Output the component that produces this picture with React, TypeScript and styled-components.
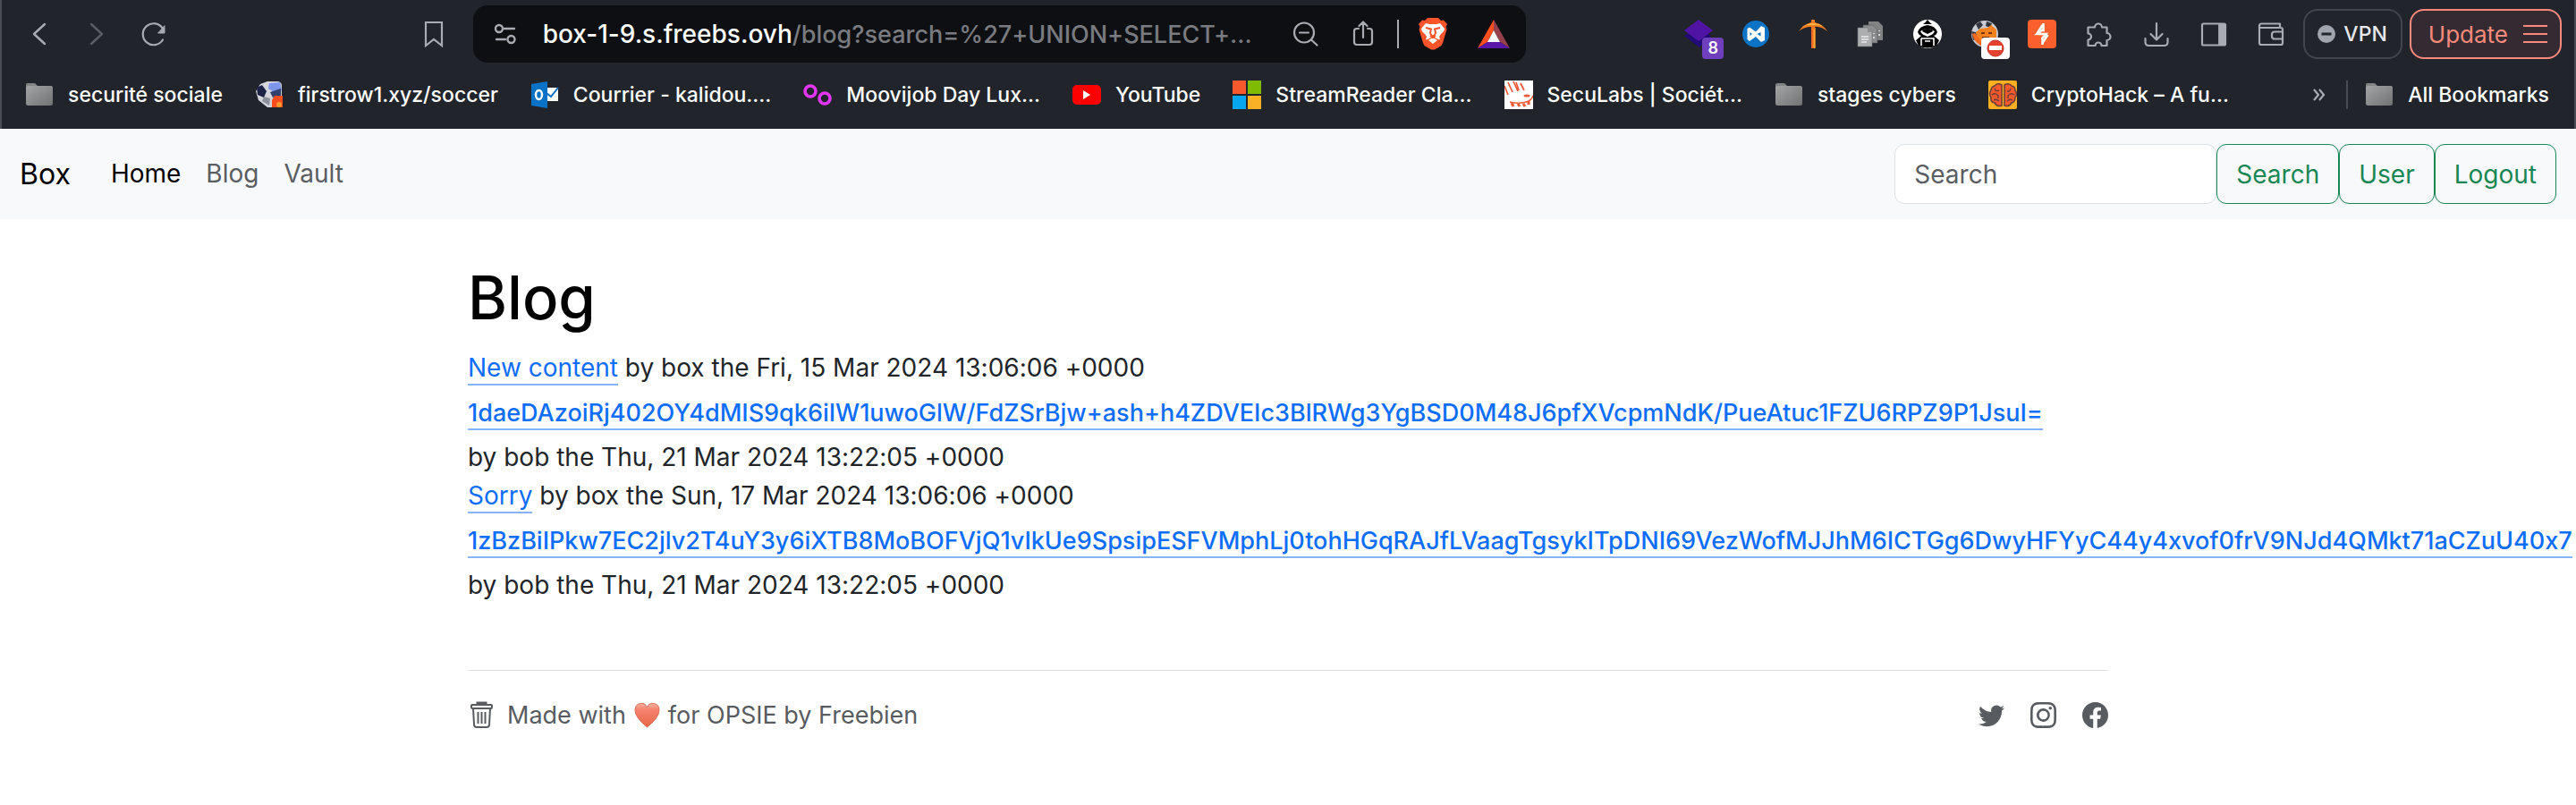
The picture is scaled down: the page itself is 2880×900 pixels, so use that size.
import React from 'react';
import styled, { createGlobalStyle } from 'styled-components';
import { BsFacebook, BsInstagram, BsTwitter } from 'react-icons/bs';

const GlobalStyle = createGlobalStyle`
  *, *::before, *::after { box-sizing: border-box; }
  body {
    margin: 0;
    background: #fff;
    color: #212529;
    font-family: Inter, "Liberation Sans", sans-serif;
    font-feature-settings: "calt" 0;
    overflow-x: hidden;
  }
  button, input { font: inherit; }
  svg { display: block; flex: none; }
`;

/* ---------- Browser chrome ---------- */

const Chrome = styled.header`
  background: #21242b;
  border: 2px solid #4a4c52;
  border-width: 0 2px;
  padding-bottom: 8px;
`;

const Toolbar = styled.div`
  display: flex;
  align-items: center;
  height: 76px;
  padding: 0 14px 0 10px;
`;

const Slot = styled.button`
  position: relative;
  display: flex;
  flex: none;
  align-items: center;
  justify-content: center;
  width: 64px;
  height: 64px;
  padding: 0;
  border: 0;
  background: none;
  color: #a8abb1;
`;

const History = styled.nav`
  display: flex;
`;

const SaveArea = styled.div`
  display: flex;
  flex: 250 0 64px;
  justify-content: flex-end;
  margin-right: 12px;
`;

const AddressBar = styled.div`
  display: flex;
  flex: 1176 1 0;
  align-items: center;
  height: 64px;
  min-width: 0;
  padding: 0 4px;
  border-radius: 16px;
  background: #0d0f13;
  & > :last-child { margin-left: 4px; }
`;

const Address = styled.span`
  flex: 1;
  min-width: 0;
  margin-left: 10px;
  overflow: hidden;
  color: #797b80;
  font-size: 27px;
  font-weight: 500;
  line-height: 36px;
  white-space: nowrap;
`;

const Host = styled.span`
  color: #fff;
  font-size: 28px;
`;

const Rule = styled.span`
  flex: none;
  width: 2px;
  height: 32px;
  margin: 0 6px;
  background: #a8abb1;
`;

const Extensions = styled.div`
  display: flex;
  flex: 162 0 auto;
  align-items: center;
  justify-content: flex-end;
`;

const Badge = styled.span<{ $alert?: boolean }>`
  position: absolute;
  top: 36px;
  left: ${(p) => (p.$alert ? 28 : 36)}px;
  display: flex;
  align-items: center;
  justify-content: center;
  width: ${(p) => (p.$alert ? 32 : 24)}px;
  height: 24px;
  border-radius: 4px;
  background: ${(p) => (p.$alert ? '#fff' : '#6f3fbd')};
  color: #fff;
  font-size: 18px;
  font-weight: 600;
  line-height: 24px;
`;

const Pill = styled.button<{ $accent?: boolean }>`
  display: flex;
  flex: none;
  align-items: center;
  height: 56px;
  margin-left: ${(p) => (p.$accent ? 8 : 4)}px;
  padding: ${(p) => (p.$accent ? '0 13px 0 19px' : '0 15px 0 14px')};
  gap: ${(p) => (p.$accent ? 17 : 9)}px;
  border: 2px solid ${(p) => (p.$accent ? '#f98a7b' : '#42454d')};
  border-radius: 16px;
  background: ${(p) => (p.$accent ? '#332b31' : 'transparent')};
  color: ${(p) => (p.$accent ? '#f98a7b' : '#e6e7ea')};
  font-size: ${(p) => (p.$accent ? 26 : 23)}px;
  font-weight: ${(p) => (p.$accent ? 400 : 500)};
`;

const BookmarkBar = styled.nav`
  display: flex;
  align-items: center;
  gap: 36px;
  height: 60px;
  padding: 0 28px 0 26px;
`;

const Bookmark = styled.a`
  display: flex;
  flex: none;
  align-items: center;
  gap: 16px;
  color: #fff;
  font-size: 23px;
  font-weight: 500;
  line-height: 32px;
  text-decoration: none;
  white-space: nowrap;
`;

const BookmarkTail = styled.div`
  display: flex;
  align-items: center;
  gap: 19px;
  margin-left: auto;
`;

const MoreButton = styled.button`
  padding: 0 4px;
  border: 0;
  background: none;
  color: #a8abb1;
`;

const TailRule = styled.span`
  width: 2px;
  height: 32px;
  background: #4a4c52;
`;

/* ---------- Site ---------- */

const SiteBar = styled.nav`
  display: flex;
  align-items: center;
  height: 101px;
  padding: 0 22px;
  background: #f8f9fb;
`;

const Brand = styled.a`
  margin-right: 45px;
  color: #000;
  font-size: 32px;
  line-height: 48px;
  text-decoration: none;
`;

const SiteLinks = styled.div`
  display: flex;
  flex: 1;
  gap: 28px;
`;

const SiteLink = styled.a<{ $active?: boolean }>`
  color: ${(p) => (p.$active ? '#000' : '#5a5d61')};
  font-size: 28px;
  line-height: 43px;
  text-decoration: none;
`;

const SearchForm = styled.form`
  display: flex;
`;

const SearchInput = styled.input`
  width: 360px;
  height: 67px;
  padding: 0 21px;
  border: 1px solid #dee2e6;
  border-radius: 11px;
  background: #fff;
  color: #212529;
  font-size: 28px;
  &::placeholder { color: #5a5d61; opacity: 1; }
`;

const OutlineButton = styled.button`
  height: 67px;
  padding: 0 21px;
  border: 1px solid #198754;
  border-radius: 11px;
  background: transparent;
  color: #198754;
  font-size: 28px;
`;

const Container = styled.div`
  max-width: 1834px;
  margin: 0 auto;
`;

const Title = styled.h1`
  margin: 0 0 14px;
  padding-top: 45px;
  color: #000;
  font-size: 67px;
  font-weight: 500;
  line-height: 86px;
`;

const Entry = styled.p`
  margin: 0;
  font-size: 28px;
  line-height: 43px;
  white-space: nowrap;
`;

const TokenEntry = styled(Entry)`
  padding: 7px 0;
  font-size: 27px;
  font-weight: 500;
`;

const PostLink = styled.a`
  padding-bottom: 1px;
  border-bottom: 2px solid #86b4fe;
  color: #0d6efd;
  text-decoration: none;
`;

const Footer = styled.footer`
  display: flex;
  align-items: center;
  justify-content: space-between;
  margin-top: 73px;
  padding-top: 28px;
  border-top: 1px solid #dee0e2;
  color: #585c60;
  font-size: 27px;
  line-height: 43px;
`;

const Credit = styled.div`
  display: flex;
  align-items: center;
  gap: 9px;
`;

const TrashLink = styled.a`
  margin-right: 4px;
  color: inherit;
`;

const Socials = styled.div`
  display: flex;
  gap: 29px;
`;

const SocialLink = styled.a`
  color: inherit;
`;

/* ---------- Drawings ---------- */

const Glyph = ({ children, w = 2 }: { children: React.ReactNode; w?: number }) => (
  <svg width="32" height="32" viewBox="0 0 32 32" fill="none" stroke="currentColor" strokeWidth={w} strokeLinecap="round" strokeLinejoin="round" aria-hidden="true">
    {children}
  </svg>
);
const Art = ({ children }: { children: React.ReactNode }) => (
  <svg width="32" height="32" viewBox="0 0 32 32" aria-hidden="true">{children}</svg>
);

const Folder = () => (
  <Art>
    <defs>
      <linearGradient id="folder" x1="0" y1="0" x2="1" y2="1">
        <stop offset="0" stopColor="#a2a4a6" />
        <stop offset="1" stopColor="#707274" />
      </linearGradient>
    </defs>
    <path d="M1 8V5q0-2 2-2h7q2 0 3 2l1 1h14q3 0 3 3z" fill="#828486" />
    <rect x="1" y="6" width="30" height="22" rx="2.5" fill="url(#folder)" />
  </Art>
);

const Soccer = () => (
  <Art>
    <path d="M6 4 14 1h12q4 1 4 5v20l-6 4H14L4 22 1 12z" fill="#d4d6dc" />
    <path d="M2 8l6-3 5 7-3 7-7-3z" fill="#1c2246" />
    <path d="M16 3l12-1 2 9-9 2-6-4z" fill="#7d95ea" />
    <path d="M17 13l12-4v8l-9 2z" fill="#32406f" />
    <path d="M10 18l7 2-1 8-8-5z" fill="#8d909a" />
    <path d="M22 17h9v13H19v-8z" fill="#fb4d1e" />
    <circle cx="27" cy="27" r="3" fill="#ff9c2a" />
  </Art>
);

const Outlook = () => (
  <Art>
    <path d="M16 8h15v15H16z" fill="#fff" />
    <path d="M18 14l5 4 8-10" fill="none" stroke="#0b6cbd" strokeWidth="2" />
    <path d="M1 4 19 1v30L1 28z" fill="#0872c6" />
    <ellipse cx="9.500" cy="16" rx="3.500" ry="5" fill="none" stroke="#fff" strokeWidth="2.500" />
  </Art>
);

const Rings = () => (
  <Art>
    <g fill="none" stroke="#e435f0" strokeWidth="3.600">
      <circle cx="8" cy="12" r="6" />
      <circle cx="24" cy="20" r="6" />
    </g>
  </Art>
);

const YouTube = () => (
  <Art>
    <rect y="5" width="32" height="22" rx="5" fill="#fe0000" />
    <path d="M12 11v10l8-5z" fill="#fff" />
  </Art>
);

const Windows = () => (
  <Art>
    <path d="M0 0h15v15H0z" fill="#f7582c" />
    <path d="M17 0h15v15H17z" fill="#80bb03" />
    <path d="M0 17h15v15H0z" fill="#06a5f0" />
    <path d="M17 17h15v15H17z" fill="#fbb126" />
  </Art>
);

const SecuLabs = () => (
  <Art>
    <path d="M0 0h32v32H0z" fill="#fff" />
    <g fill="none" stroke="#ef5a38" strokeWidth="1.700">
      <path d="M0 6l4 10M4 2l5 11M10 1l5 11M13 2l3 9M18 3l4 8" />
      <path d="M6 24q12 3 21-1 4-2 5-6" strokeWidth="1.400" />
      <path d="M8 25l2 4M15 26l2 3M21 26l2 3M27 23v4" strokeWidth="3" />
    </g>
    <ellipse cx="25" cy="17" rx="3.500" ry="1.500" fill="#ef5a38" />
  </Art>
);

const Brain = () => (
  <Art>
    <rect width="32" height="32" rx="2" fill="#fcaf1f" />
    <path d="M15 5q-5-3-8 1-4 1-4 5-3 4 0 8-1 5 4 6 3 5 8 3zM18 5q5-3 8 1 4 1 4 5 3 4 0 8 0 5-4 6-3 5-8 3z" fill="#f45a2c" stroke="#6b3f3a" strokeWidth="1.500" />
    <path d="M7 9q1 4 5 2M4 16q4-3 7 1v3M6 22q3-2 6 1M25 9q-1 4-4 3M29 16q-4-3-7 1v3M27 22q-3-2-6 1" fill="none" stroke="#6b3f3a" strokeWidth="1.400" />
  </Art>
);

const Lion = () => (
  <svg width="32" height="36" viewBox="0 0 32 36" aria-hidden="true">
    <path d="M10 0h12l3 3 3-.5 4 4.500-1.500 3 1 3L27 28q-1 3-3 4l-6 3.500h-4L8 32q-2-1-3-4L.5 13l1-3L0 7l4-4.500 3 .5z" fill="#fb542b" />
    <path d="M8 6l4 1h8l4-1 5 6q0 3-4 6l-2 3 1 3q-1 1-4-1l-4-2-4 2q-3 2-4 1l1-3-2-3q-4-3-4-6zM16 22l5 3-5 4-5-4z" fill="#fff" />
    <path d="M8 11l6 1.500-1 4 1 2.500 2 1.500 2-1.500 1-2.500-1-4 6-1.500M13 20l3 2 3-2" fill="none" stroke="#fb542b" strokeWidth="2" />
  </svg>
);

const Prism = () => (
  <svg width="36" height="32" viewBox="0 0 36 32" aria-hidden="true">
    <path d="M18 0v12L11 25 0 32z" fill="#ff4f1f" />
    <path d="M18 0v12l7 13 11 7z" fill="#96404e" />
    <path d="M0 32l11-7h14l11 7z" fill="#5a16a6" />
    <path d="M18 12l7 13H11z" fill="#fff" />
  </svg>
);

const Layers = () => (
  <Art>
    <path d="M0 18l16-9 14 9-13 13z" fill="#210a78" />
    <path d="M16 0l16 12-16 12L0 12z" fill="#5014a4" />
  </Art>
);

const Studio = () => (
  <Art>
    <circle cx="16" cy="16" r="15" fill="#0d73c5" />
    <path d="M6.500 10 9 8.500l7 5 6-6.500 4 2v14l-4 2-6-6-7 5L6.500 22zm3 4v4l2.500-2zm12 0-4 2 4 2.500z" fill="#fff" fillRule="evenodd" />
  </Art>
);

const Pickaxe = () => (
  <Art>
    <path d="M14 9h4.500v23H14z" fill="#f4692b" />
    <path d="M16.500 9h2v23h-2z" fill="#fcaa2e" />
    <path d="M0 13Q5 5 14 3V0h4v3q9 2 14 10-7-6-14-5v3h-4V8Q6 8 0 13z" fill="#f77a22" />
    <path d="M5 8q5-4 11-4t11 4q-6-3-11-2-6-1-11 2z" fill="#fdbb45" />
  </Art>
);

const Documents = () => (
  <Art>
    <path d="M14 2h11l5 5v16H14z" fill="#808284" />
    <path d="M8 6h11l5 5v15H8z" fill="#8b8d8f" stroke="#55585c" strokeWidth=".6" />
    <path d="M2 9h11l5 5v16H2z" fill="#acaeb0" stroke="#6d6f72" strokeWidth=".6" />
    <path d="M13 9v5h5" fill="#8d8f91" />
    <path d="M6 19h8M6 22h8M6 25h6M20 15v1M20 19v2M26 12v1M26 16v2" stroke="#e9eaeb" strokeWidth="1.600" />
  </Art>
);

const Hood = () => (
  <Art>
    <circle cx="16" cy="16" r="16" fill="#fff" />
    <path d="M11 5q3-2 5-5 2 3 5 5z" fill="#000" />
    <path d="M16 6q9 1 11 8-1 3-4 4l6 5-3 6q-10 5-20 0l-3-6 6-5q-3-1-4-4 2-7 11-8z" fill="#000" />
    <path d="M8 13q8-6 16 0-2 4-6 5l-2 1-2-1q-4-1-6-5z" fill="#fff" />
    <path d="M11 11q5-2 10 0l1 2-6 3-6-3z" fill="#000" />
    <path d="M9 21h14v8M9 21v8M13 24h6" stroke="#fff" strokeWidth="1.600" fill="none" />
  </Art>
);

const Globe = () => (
  <Art>
    <circle cx="16" cy="16" r="15" fill="#c9ccd2" />
    <path d="M6 5l5-3 3 4-5 5zM18 2l6 2-2 5-5-2zM1 13l5 1 2 7-5 2z" fill="#33363f" />
    <path d="M6 14l5-4 8-1 4-3 6 5v9l-8 4H9z" fill="#f58220" />
    <path d="M2 16q2 10 12 14l-2-6-7-9z" fill="#f36a1c" />
    <path d="M12 15h4M20 15h4M13 20h8" stroke="#7a3412" strokeWidth="2" />
  </Art>
);

const Burp = () => (
  <Art>
    <rect width="32" height="32" rx="4" fill="#fb5f2e" />
    <path d="M17.500 4v8h-2l-5 4h10l-4 4.500V28M16.500 6l-6 9.500M22.500 17l-6 9" fill="none" stroke="#fff" strokeWidth="2.600" />
  </Art>
);

const NoEntry = () => (
  <svg width="20" height="20" viewBox="0 0 20 20" aria-hidden="true">
    <circle cx="10" cy="10" r="9" fill="#e5432f" stroke="#c92c20" />
    <path d="M3 7h14v5H3z" fill="#fff" />
  </svg>
);

const Trash = () => (
  <svg width="31" height="31" viewBox="0 0 31 31" fill="none" stroke="currentColor" strokeWidth="2" aria-hidden="true">
    <path d="M11 3.500V2h9v1.500" strokeWidth="3" />
    <rect x="4" y="4" width="23" height="4" rx="1" />
    <path d="M6 8l1 18q0 3 3 3h11q3 0 3-3l1-18M11.500 12v13M15.500 12v13M19.500 12v13" />
  </svg>
);

const Heart = () => (
  <svg width="29" height="29" viewBox="0 0 29 29" role="img" aria-label="love">
    <defs>
      <linearGradient id="heart" x1="0" y1="0" x2="0" y2="1">
        <stop offset="0" stopColor="#f6b3a3" />
        <stop offset=".25" stopColor="#f58470" />
        <stop offset="1" stopColor="#ea6545" />
      </linearGradient>
    </defs>
    <path d="M14.500 28Q1 17 1 9q0-7 6.500-7.500Q13 1 14.500 6 16 1 21.500 1.500 28 2 28 9q0 8-13.500 19z" fill="url(#heart)" stroke="#dc6b50" />
  </svg>
);

/* ---------- Content ---------- */

const bookmarks: [React.ComponentType, string][] = [
  [Folder, 'securité sociale'],
  [Soccer, 'firstrow1.xyz/soccer'],
  [Outlook, 'Courrier - kalidou....'],
  [Rings, 'Moovijob Day Lux...'],
  [YouTube, 'YouTube'],
  [Windows, 'StreamReader Cla...'],
  [SecuLabs, 'SecuLabs | Sociét...'],
  [Folder, 'stages cybers'],
  [Brain, 'CryptoHack – A fu...'],
];

const posts: { title: string; by: string; long?: boolean }[] = [
  { title: 'New content', by: 'by box the Fri, 15 Mar 2024 13:06:06 +0000' },
  {
    title: '1daeDAzoiRj402OY4dMIS9qk6iIW1uwoGlW/FdZSrBjw+ash+h4ZDVEIc3BlRWg3YgBSD0M48J6pfXVcpmNdK/PueAtuc1FZU6RPZ9P1JsuI=',
    by: 'by bob the Thu, 21 Mar 2024 13:22:05 +0000',
    long: true,
  },
  { title: 'Sorry', by: 'by box the Sun, 17 Mar 2024 13:06:06 +0000' },
  {
    title: '1zBzBiIPkw7EC2jlv2T4uY3y6iXTB8MoBOFVjQ1vIkUe9SpsipESFVMphLj0tohHGqRAJfLVaagTgsykITpDNI69VezWofMJJhM6ICTGg6DwyHFYyC44y4xvof0frV9NJd4QMkt71aCZuU40x7',
    by: 'by bob the Thu, 21 Mar 2024 13:22:05 +0000',
    long: true,
  },
];

export default function App() {
  return (
    <>
      <GlobalStyle />
      <Chrome>
        <Toolbar>
          <History aria-label="History">
            <Slot aria-label="Back"><Glyph w={2.4}><path d="M22 5 10 16l12 11" /></Glyph></Slot>
            <Slot aria-label="Forward"><Glyph w={2.4}><path d="M10 5l12 11-12 11" stroke="#5a5d65" /></Glyph></Slot>
            <Slot aria-label="Reload">
              <Glyph w={2.2}>
                <path d="M26 22.500A12 12 0 1 1 26 10" />
                <path d="M28 7v8h-7z" fill="currentColor" strokeWidth="1" />
              </Glyph>
            </Slot>
          </History>
          <SaveArea>
            <Slot aria-label="Bookmark this page"><Glyph w={2.2}><path d="M7 3h18v26l-9-7-9 7z" strokeLinejoin="miter" /></Glyph></Slot>
          </SaveArea>
          <AddressBar>
            <Slot aria-label="Site settings">
              <Glyph w={2.4}>
                <circle cx="9" cy="10" r="4" />
                <path d="M15 10h11M6 22h10" />
                <circle cx="22.500" cy="22" r="4" />
              </Glyph>
            </Slot>
            <Address><Host>box-1-9.s.freebs.ovh</Host>/blog?search=%27+UNION+SELECT+...</Address>
            <Slot aria-label="Zoom out"><Glyph w={2.2}><circle cx="14" cy="14.500" r="11" /><path d="M9 14.500h10M22 22.500l6.500 6" /></Glyph></Slot>
            <Slot aria-label="Share"><Glyph w={2.2}><path d="M11 10H9q-3 0-3 3v12q0 3 3 3h14q3 0 3-3V13q0-3-3-3h-2M16 20V3M11.500 7 16 2.500 20.500 7" /></Glyph></Slot>
            <Rule />
            <Slot aria-label="Shields"><Lion /></Slot>
            <Slot aria-label="Rewards"><Prism /></Slot>
          </AddressBar>
          <Extensions>
            <Slot aria-label="Layers"><Layers /><Badge>8</Badge></Slot>
            <Slot aria-label="Studio"><Studio /></Slot>
            <Slot aria-label="Pickaxe"><Pickaxe /></Slot>
            <Slot aria-label="Documents"><Documents /></Slot>
            <Slot aria-label="Hood"><Hood /></Slot>
            <Slot aria-label="Proxy"><Globe /><Badge $alert><NoEntry /></Badge></Slot>
            <Slot aria-label="Burp"><Burp /></Slot>
            <Slot aria-label="Extensions">
              <Glyph w={2.2}><path d="M3.500 8.500H11a4 4 0 1 1 8 0h5.500v6.500a4 4 0 1 1 0 8v6h-6a3.500 3.500 0 1 0-7 0h-8v-6.500a3.500 3.500 0 1 0 0-7z" /></Glyph>
            </Slot>
            <Slot aria-label="Downloads"><Glyph w={2.2}><path d="M3.500 21v4q0 4 4 4h17q4 0 4-4v-4M16 4v18M9.500 16l6.500 6.500 6.500-6.500" /></Glyph></Slot>
            <Slot aria-label="Side panel"><Glyph w={2.2}><rect x="3" y="4.500" width="26" height="24" rx="1.500" /><path d="M22 5h7v23h-7z" fill="currentColor" strokeWidth="1" /></Glyph></Slot>
            <Slot aria-label="Wallet">
              <Glyph w={2.2}><path d="M3 9V7q0-2.500 2.500-2.500H26V9M3 9h24q2 0 2 2v15q0 2-2 2H5q-2 0-2-2zM29 13.500H20q-3 0-3 3v2q0 3 3 3h9" /></Glyph>
            </Slot>
            <Pill>
              <svg width="20" height="20" viewBox="0 0 20 20" aria-hidden="true">
                <circle cx="10" cy="10" r="10" fill="#a0a4ac" />
                <path d="M4.500 10h11" stroke="#21242b" strokeWidth="3" />
              </svg>
              VPN
            </Pill>
            <Pill $accent>
              Update
              <svg width="28" height="24" viewBox="0 0 28 24" fill="none" stroke="currentColor" strokeWidth="2" aria-hidden="true">
                <path d="M0 3h27M0 12h27M0 21h27" />
              </svg>
            </Pill>
          </Extensions>
        </Toolbar>
        <BookmarkBar aria-label="Bookmarks">
          {bookmarks.map(([Icon, label]) => (
            <Bookmark href="#" key={label}><Icon />{label}</Bookmark>
          ))}
          <BookmarkTail>
            <MoreButton aria-label="More bookmarks">
              <svg width="14" height="16" viewBox="0 0 14 16" fill="none" stroke="currentColor" strokeWidth="2.200" aria-hidden="true">
                <path d="M1 2l5 6-5 6M7 2l5 6-5 6" />
              </svg>
            </MoreButton>
            <TailRule />
            <Bookmark href="#"><Folder />All Bookmarks</Bookmark>
          </BookmarkTail>
        </BookmarkBar>
      </Chrome>

      <SiteBar>
        <Brand href="#">Box</Brand>
        <SiteLinks>
          <SiteLink href="#" $active>Home</SiteLink>
          <SiteLink href="#">Blog</SiteLink>
          <SiteLink href="#">Vault</SiteLink>
        </SiteLinks>
        <SearchForm>
          <SearchInput type="search" placeholder="Search" aria-label="Search" />
          <OutlineButton type="button">Search</OutlineButton>
          <OutlineButton type="button">User</OutlineButton>
          <OutlineButton type="button">Logout</OutlineButton>
        </SearchForm>
      </SiteBar>

      <Container>
        <main>
          <Title>Blog</Title>
          {posts.map(({ title, by, long }) =>
            long ? (
              <React.Fragment key={title}>
                <TokenEntry><PostLink href="#">{title}</PostLink></TokenEntry>
                <Entry>{by}</Entry>
              </React.Fragment>
            ) : (
              <Entry key={title}><PostLink href="#">{title}</PostLink> {by}</Entry>
            ),
          )}
        </main>
        <Footer>
          <Credit>
            <TrashLink href="#" aria-label="Trash"><Trash /></TrashLink>
            <span>Made with</span>
            <Heart />
            <span>for OPSIE by Freebien</span>
          </Credit>
          <Socials>
            <SocialLink href="#" aria-label="Twitter"><BsTwitter size={29} /></SocialLink>
            <SocialLink href="#" aria-label="Instagram"><BsInstagram size={29} /></SocialLink>
            <SocialLink href="#" aria-label="Facebook"><BsFacebook size={29} /></SocialLink>
          </Socials>
        </Footer>
      </Container>
    </>
  );
}
